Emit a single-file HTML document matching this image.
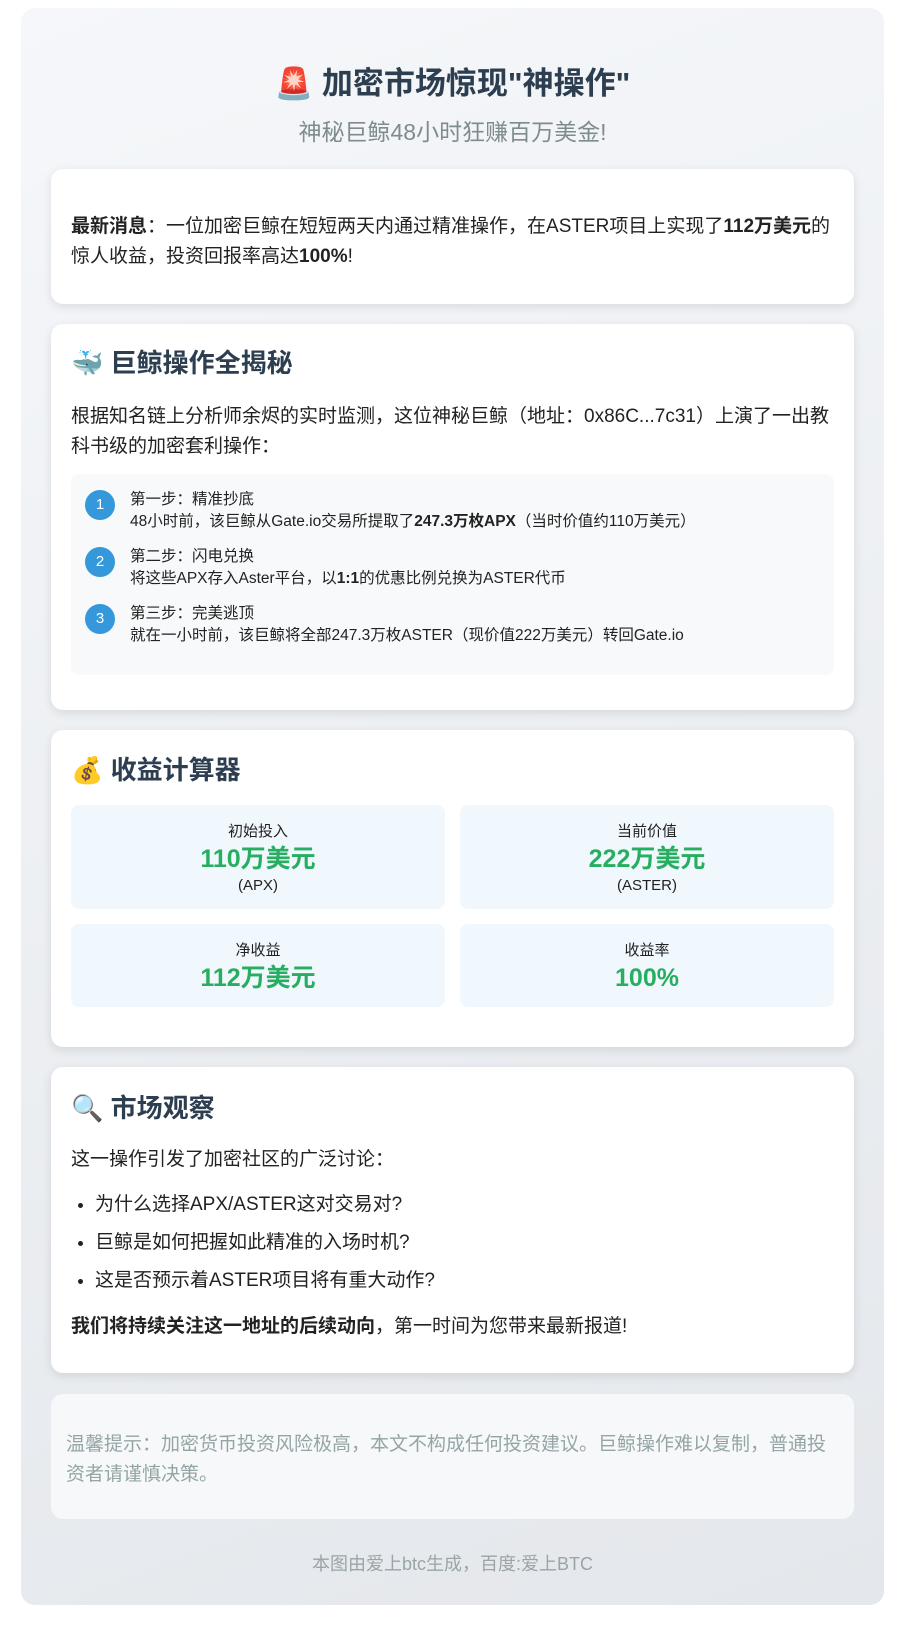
<!DOCTYPE html>
<html><head><meta charset="utf-8"><style>
*{margin:0;padding:0;box-sizing:border-box}
body{width:900px;height:1638px;background:#fff;font-family:"Liberation Sans","Noto Sans CJK SC",sans-serif;color:#2c3e50;position:relative}
.wrap{position:absolute;left:21px;top:8px;width:863px;height:1597px;border-radius:14px;background:linear-gradient(160deg,#f5f7fa,#e4e7eb)}
.card{position:absolute;left:30px;width:803px;background:#fff;border-radius:12px;box-shadow:0 3px 10px rgba(0,0,0,.1);padding:0 20px}
h1{position:absolute;left:0;width:863px;text-align:center;top:56px;font-size:31px;line-height:40px;font-weight:bold}
.sub{position:absolute;left:0;width:863px;text-align:center;top:108px;font-size:23px;line-height:32px;color:#7f8c8d}
.p{font-size:19px;line-height:30px;color:#222}
h2{font-size:26px;line-height:34px;font-weight:bold;position:absolute;left:20px}
.steps{position:absolute;left:20px;top:150px;width:763px;height:201px;background:#f8f9fa;border-radius:8px}
.st{position:absolute;left:59px;font-size:15.5px;line-height:22px;color:#222}
.c{position:absolute;left:14px;width:30px;height:30px;border-radius:50%;background:#3498db;color:#fff;font-size:15px;text-align:center;line-height:30px}
.box{position:absolute;width:374px;background:#f0f7fd;border-radius:8px;text-align:center;color:#222}
.box .l{font-size:15px;line-height:20px}
.box .v{font-size:25px;line-height:34px;font-weight:bold;color:#27ae60}
.box .s{font-size:15px;line-height:20px}
ul{list-style:disc;padding-left:24px}
li{font-size:19px;line-height:38px;color:#222}
</style></head><body>
<div class="wrap">
<h1>🚨 加密市场惊现"神操作"</h1>
<div class="sub">神秘巨鲸48小时狂赚百万美金!</div>

<div class="card" style="top:161px;height:135px">
<div class="p" style="position:absolute;left:20px;right:20px;top:43px"><b>最新消息</b>：一位加密巨鲸在短短两天内通过精准操作，在ASTER项目上实现了<b>112万美元</b>的惊人收益，投资回报率高达<b>100%</b>!</div>
</div>

<div class="card" style="top:316px;height:386px">
<h2 style="top:22px">🐳 巨鲸操作全揭秘</h2>
<div class="p" style="position:absolute;left:20px;right:20px;top:78px">根据知名链上分析师余烬的实时监测，这位神秘巨鲸（地址：0x86C...7c31）上演了一出教科书级的加密套利操作：</div>
<div class="steps">
<div class="c" style="top:16px">1</div>
<div class="st" style="top:15px">第一步：精准抄底<br>48小时前，该巨鲸从Gate.io交易所提取了<b>247.3万枚APX</b>（当时价值约110万美元）</div>
<div class="c" style="top:73px">2</div>
<div class="st" style="top:72px">第二步：闪电兑换<br>将这些APX存入Aster平台，以<b>1:1</b>的优惠比例兑换为ASTER代币</div>
<div class="c" style="top:130px">3</div>
<div class="st" style="top:129px">第三步：完美逃顶<br>就在一小时前，该巨鲸将全部247.3万枚ASTER（现价值222万美元）转回Gate.io</div>
</div>
</div>

<div class="card" style="top:722px;height:317px">
<h2 style="top:23px">💰 收益计算器</h2>
<div class="box" style="left:20px;top:75px;height:104px;padding-top:17px"><div class="l">初始投入</div><div class="v">110万美元</div><div class="s">(APX)</div></div>
<div class="box" style="left:409px;top:75px;height:104px;padding-top:17px"><div class="l">当前价值</div><div class="v">222万美元</div><div class="s">(ASTER)</div></div>
<div class="box" style="left:20px;top:194px;height:83px;padding-top:17px"><div class="l">净收益</div><div class="v">112万美元</div></div>
<div class="box" style="left:409px;top:194px;height:83px;padding-top:17px"><div class="l">收益率</div><div class="v">100%</div></div>
</div>

<div class="card" style="top:1059px;height:306px">
<h2 style="top:24px">🔍 市场观察</h2>
<div class="p" style="position:absolute;left:20px;top:78px">这一操作引发了加密社区的广泛讨论：</div>
<ul style="position:absolute;left:20px;top:119px"><li>为什么选择APX/ASTER这对交易对?</li><li>巨鲸是如何把握如此精准的入场时机?</li><li>这是否预示着ASTER项目将有重大动作?</li></ul>
<div class="p" style="position:absolute;left:20px;top:245px"><b>我们将持续关注这一地址的后续动向</b>，第一时间为您带来最新报道!</div>
</div>

<div class="card" style="top:1386px;height:125px;background:#f7f8fa;box-shadow:none;padding:0">
<div style="position:absolute;left:15px;right:15px;top:36px;font-size:19px;line-height:30px;color:#95a5a6">温馨提示：加密货币投资风险极高，本文不构成任何投资建议。巨鲸操作难以复制，普通投资者请谨慎决策。</div>
</div>

<div style="position:absolute;left:0;width:863px;top:1542px;text-align:center;font-size:18px;line-height:28px;color:#9aa5a6">本图由爱上btc生成，百度:爱上BTC</div>
</div>
</body></html>
